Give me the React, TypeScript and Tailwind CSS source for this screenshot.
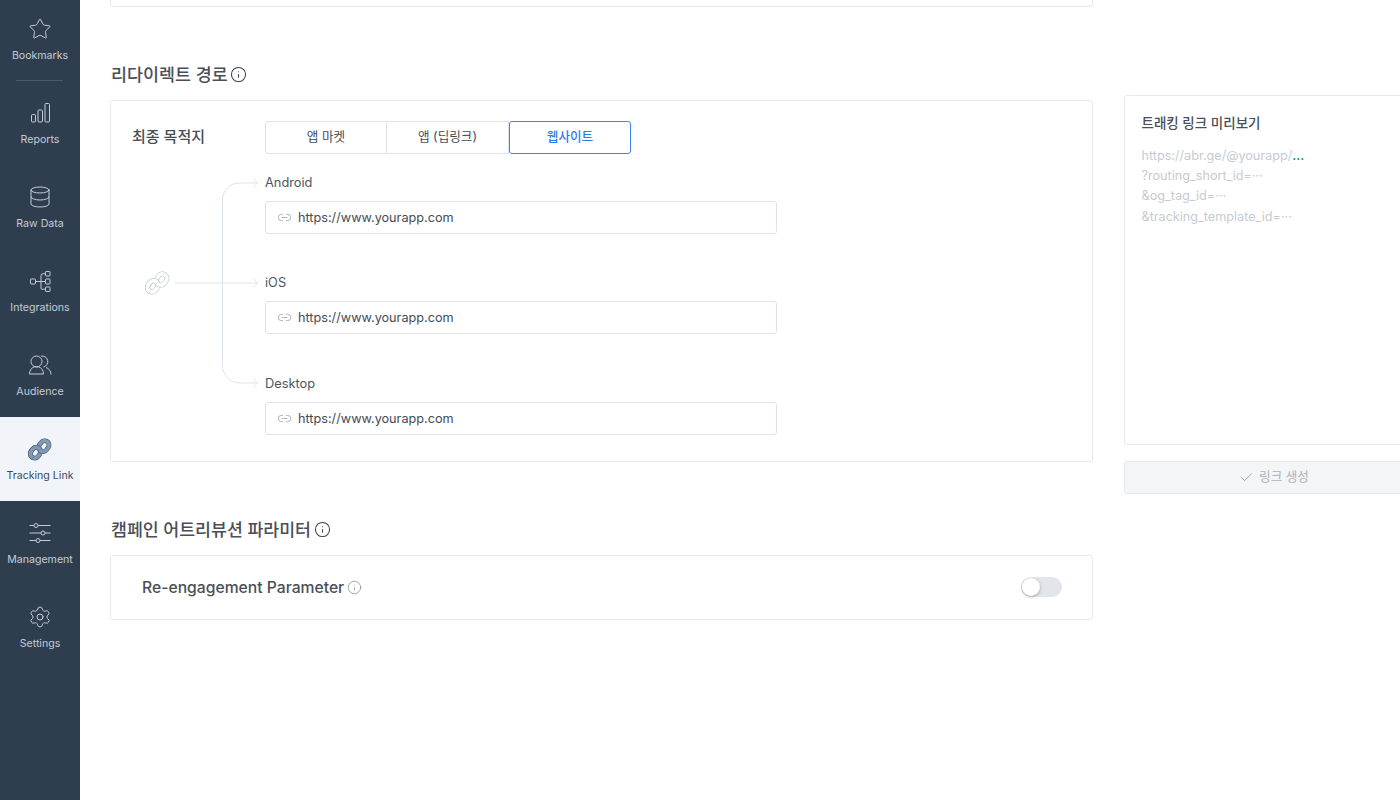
import { Star, Database, Settings, Info, Link2, Check } from "lucide-react";
import { useId } from "react";
import type { ReactNode } from "react";

const FONT = "font-['Inter','Noto_Sans_CJK_KR',sans-serif]";

function Chain({ className, fill, stroke }: { className?: string; fill: string; stroke: string }) {
  const id = useId();
  const link = (x: number, y: number) => (
    <>
      <rect x={x} y={y} width="10.5" height="8" rx="4" stroke={stroke} strokeWidth="4.4" />
      <rect x={x} y={y} width="10.5" height="8" rx="4" stroke={fill} strokeWidth="3.4" />
    </>
  );
  return (
    <svg viewBox="0 0 24 24" className={className} fill="none">
      <defs>
        <clipPath id={id}>
          <rect x="-10" y="-10" width="44" height="22" />
        </clipPath>
      </defs>
      <g transform="rotate(-52 12 12)">
        {link(1.5, 6.8)}
        {link(11, 9.2)}
        <g clipPath={`url(#${id})`}>{link(1.5, 6.8)}</g>
      </g>
    </svg>
  );
}

const ReportsIcon = () => (
  <svg viewBox="0 0 24 24" className="w-[24px] h-[24px]" fill="none" stroke="currentColor" strokeWidth="1">
    <rect x="3.5" y="13.5" width="4" height="7.5" rx="1" />
    <rect x="10" y="9" width="4.5" height="12" rx="1" />
    <rect x="17" y="2.5" width="4.5" height="18.5" rx="1" />
  </svg>
);

const IntegrationsIcon = () => (
  <svg viewBox="0 0 24 24" className="w-[24px] h-[24px]" fill="none" stroke="currentColor" strokeWidth="1">
    <rect x="2.5" y="10" width="5" height="5" rx="0.6" />
    <rect x="17.5" y="2.5" width="4.5" height="4.5" rx="0.6" />
    <rect x="17.5" y="10" width="4.5" height="5" rx="0.6" />
    <rect x="17.5" y="18" width="4.5" height="4.5" rx="0.6" />
    <path d="M7.5 12.5H17.5M17.5 4.75H15a2 2 0 0 0-2 2v12.5a1 1 0 0 0 1 1h3.5" />
  </svg>
);

const AudienceIcon = () => (
  <svg viewBox="0 0 24 24" className="w-[24px] h-[24px]" fill="none" stroke="currentColor" strokeWidth="1">
    <circle cx="8.5" cy="8.5" r="5.5" />
    <path d="M1.5 21c0-4 2.5-6.5 5-7.2h4c2.5.7 5 3.2 5 7.2z" />
    <path d="M13 3.2A5.5 5.5 0 0 1 15.5 14M18 14.5c2.8 1 5 3.5 5 7" />
  </svg>
);

const SlidersIcon = () => (
  <svg viewBox="0 0 24 24" className="w-[24px] h-[24px]" fill="none" stroke="currentColor" strokeWidth="1">
    <path d="M1.5 4.5H6M10 4.5H22.5M1.5 12H13M17 12H22.5M1.5 19.5H8M12 19.5H22.5" />
    <circle cx="8" cy="4.5" r="2" />
    <circle cx="15" cy="12" r="2" />
    <circle cx="10" cy="19.5" r="2" />
  </svg>
);

function NavItem({ icon, label, active }: { icon: ReactNode; label: string; active?: boolean }) {
  return (
    <div className={`h-[84px] flex flex-col items-center pt-[20px] ${active ? "bg-[#f1f5f9] text-[#3a4a5c]" : "text-[#c3ccd6]"}`}>
      <div className="h-[24px] flex items-center justify-center">{icon}</div>
      <div className="mt-[5px] text-[10.6px] leading-[20px] whitespace-nowrap">{label}</div>
    </div>
  );
}

function Field({ label, className }: { label: string; className?: string }) {
  return (
    <div className={className}>
      <div className="h-[20px] text-[12.8px] leading-[21px] text-[#4b5563]">{label}</div>
      <div className="mt-[9px] w-[512px] h-[33px] border border-[#dfe3e9] rounded-[3px] flex items-center pl-[11px] gap-[6px]">
        <Link2 className="w-[15px] h-[15px] text-[#a7afba]" strokeWidth={1.5} />
        <span className="pt-[1px] text-[12.7px] text-[#454c56]">https://www.yourapp.com</span>
      </div>
    </div>
  );
}

export default function App() {
  return (
    <div className={`${FONT} w-[1400px] h-[800px] overflow-hidden flex bg-white`}>
      <aside className="w-[80px] shrink-0 h-full bg-[#2f3e4f] relative">
        <div className="-mt-[3px]">
          <NavItem icon={<Star className="w-[24px] h-[24px]" strokeWidth={1} />} label="Bookmarks" />
          <div className="h-0 relative">
            <div className="absolute left-[16px] w-[47px] -top-[1px] h-px bg-[#4d5c6d]" />
          </div>
          <NavItem icon={<ReportsIcon />} label="Reports" />
          <NavItem icon={<Database className="w-[24px] h-[24px]" strokeWidth={1} />} label="Raw Data" />
          <NavItem icon={<IntegrationsIcon />} label="Integrations" />
          <NavItem icon={<AudienceIcon />} label="Audience" />
          <NavItem icon={<Chain className="w-[26px] h-[26px]" fill="#8299b5" stroke="#46566a" />} label="Tracking Link" active />
          <NavItem icon={<SlidersIcon />} label="Management" />
          <NavItem icon={<Settings className="w-[24px] h-[24px]" strokeWidth={1} />} label="Settings" />
        </div>
      </aside>

      <main className="flex-1 flex min-w-0 pl-[30px] gap-[31px]">
        <div className="w-[983px] shrink-0">
          <div className="h-[7px] border border-t-0 border-[#e6e9ee] rounded-b-[3px]" />

          <div className="mt-[56px] h-[23px] flex items-center gap-[2px] text-[#4a4f57]">
            <h2 className="text-[17.4px] pl-px font-medium leading-[23px]">리다이렉트 경로</h2>
            <Info className="w-[17px] h-[17px] text-[#3f444c]" strokeWidth={1.5} />
          </div>

          <section className="relative mt-[13.5px] h-[362px] border border-[#e6e9ee] rounded-[3px] flex pl-[20px] pt-[20.5px]">
            <div className="w-[134px] pl-px shrink-0 h-[33px] flex items-center text-[15px] font-medium text-[#4a4f57]">최종 목적지</div>
            <div>
              <div className="flex w-[366px] h-[33px] text-[12.6px] text-[#454c56]">
                <div className="w-[122px] border border-[#dfe3e9] rounded-l-[3px] flex items-center justify-center">앱 마켓</div>
                <div className="w-[122px] border-y border-r border-[#dfe3e9] flex items-center justify-center">앱 (딥링크)</div>
                <div className="w-[122px] border border-[#3b82f6] rounded-[3px] text-[#2b7bf0] font-medium flex items-center justify-center">웹사이트</div>
              </div>
              <Field label="Android" className="mt-[18px]" />
              <Field label="iOS" className="mt-[38px]" />
              <Field label="Desktop" className="mt-[39px]" />
            </div>
            <div className="absolute left-[33px] top-[168px]">
              <Chain className="w-[27px] h-[27px]" fill="#ffffff" stroke="#b9c1cc" />
            </div>
            <svg className="absolute left-[62px] top-[70px] w-[90px] h-[220px]" viewBox="0 0 90 220" fill="none" stroke="#dfe4ea" strokeWidth="1">
              <path d="M84.5 12H67C57 12 49.5 19 49.5 29V194C49.5 204 57 212 67 212H84.5" />
              <path d="M2 112H84.5" />
              <path d="M80.5 8L84.5 12L80.5 16M80.5 108L84.5 112L80.5 116M80.5 208L84.5 212L80.5 216" />
            </svg>
          </section>

          <div className="mt-[56px] h-[23px] flex items-center gap-[3px] text-[#4a4f57]">
            <h2 className="text-[17.3px] pl-px font-medium leading-[23px]">캠페인 어트리뷰션 파라미터</h2>
            <Info className="w-[17px] h-[17px] text-[#3f444c]" strokeWidth={1.5} />
          </div>

          <section className="mt-[14px] h-[65px] border border-[#e6e9ee] rounded-[3px] flex items-center pl-[31px] pr-[30px]">
            <span className="text-[15.7px] pt-[1px] font-medium text-[#4a4f57]">Re-engagement Parameter</span>
            <Info className="ml-[3px] w-[15px] h-[15px] text-[#8b9098]" strokeWidth={1.25} />
            <div className="ml-auto w-[41px] h-[20px] rounded-full bg-[#e2e5ea] relative">
              <div className="absolute left-[1px] top-[1px] w-[18px] h-[18px] rounded-full bg-white shadow-[0_1px_3px_rgba(0,0,0,0.3)]" />
            </div>
          </section>
        </div>

        <div className="w-[300px] shrink-0 pt-[95px]">
          <div className="h-[350px] border border-[#e6e9ee] rounded-[3px] pl-[16.5px] pt-[17px]">
            <div className="text-[13.5px] leading-[20px] font-medium text-[#4a4f57]">트래킹 링크 미리보기</div>
            <div className="mt-[12.5px] text-[12.65px] leading-[20.4px] text-[#c6cbd3]">
              <div>https://abr.ge/@yourapp/<span className="text-[#12a86b] font-semibold">...</span></div>
              <div>?routing_short_id=···</div>
              <div>&amp;og_tag_id=···</div>
              <div>&amp;tracking_template_id=···</div>
            </div>
          </div>
          <div className="mt-[16px] h-[33px] border border-[#e6e9ee] rounded-[3px] bg-[#f4f5f7] flex items-center justify-center gap-[5px] text-[12.6px] text-[#adb3bc]">
            <Check className="w-[15px] h-[15px] text-[#9aa1ab]" strokeWidth={1.5} />
            <span>링크 생성</span>
          </div>
        </div>
      </main>
    </div>
  );
}
